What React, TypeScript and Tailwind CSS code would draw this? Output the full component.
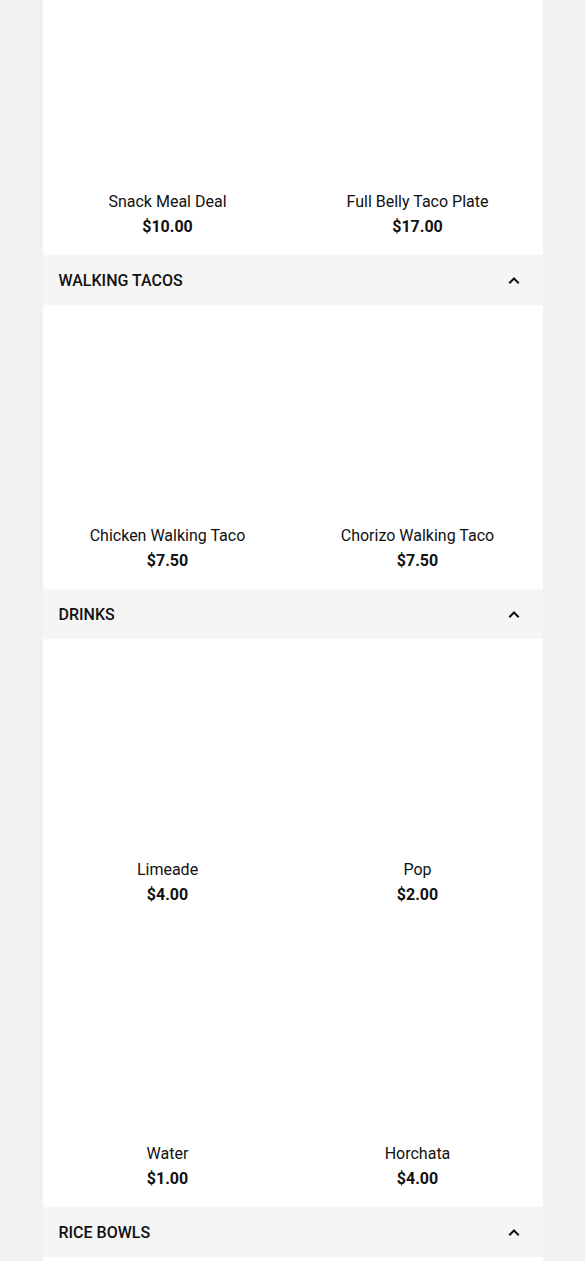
type Item = { name: string; price: string };
type Section = { title: string | null; items: Item[] };

const sections: Section[] = [
  {
    title: null,
    items: [
      { name: "Snack Meal Deal", price: "$10.00" },
      { name: "Full Belly Taco Plate", price: "$17.00" },
    ],
  },
  {
    title: "WALKING TACOS",
    items: [
      { name: "Chicken Walking Taco", price: "$7.50" },
      { name: "Chorizo Walking Taco", price: "$7.50" },
    ],
  },
  {
    title: "DRINKS",
    items: [
      { name: "Limeade", price: "$4.00" },
      { name: "Pop", price: "$2.00" },
      { name: "Water", price: "$1.00" },
      { name: "Horchata", price: "$4.00" },
    ],
  },
  { title: "RICE BOWLS", items: [] },
];

function Chevron() {
  return (
    <svg width="12" height="8" viewBox="0 0 12 8" fill="none">
      <path d="M2 6.5 L6 2.5 L10 6.5" stroke="#111" strokeWidth="2" strokeLinecap="square" />
    </svg>
  );
}

function MenuItem({ item }: { item: Item }) {
  return (
    <div className="flex h-[284px] flex-col items-center text-[16px] text-[#111]">
      <div className="h-[219px] w-full" />
      <div className="leading-6">{item.name}</div>
      <div className="mt-px font-bold leading-6">{item.price}</div>
    </div>
  );
}

export default function App() {
  return (
    <div
      className="h-[1261px] overflow-hidden bg-[#f1f1f1]"
      style={{ fontFamily: "Roboto, 'Liberation Sans', sans-serif" }}
    >
      <div className="mx-auto -mt-[29px] w-[500px]">
        {sections.map((s, i) => (
          <div key={i}>
            {s.title && (
              <div className="flex h-[50px] items-center justify-between bg-[#f5f5f5] pl-4 pr-[23px] text-[16px] font-medium text-[#111]">
                <span className="pt-0.5">{s.title}</span>
                <Chevron />
              </div>
            )}
            <div className="grid grid-cols-2 bg-white">
              {s.items.map((it) => (
                <MenuItem key={it.name} item={it} />
              ))}
            </div>
            {s.items.length === 0 && <div className="h-[40px] bg-white" />}
          </div>
        ))}
      </div>
    </div>
  );
}
